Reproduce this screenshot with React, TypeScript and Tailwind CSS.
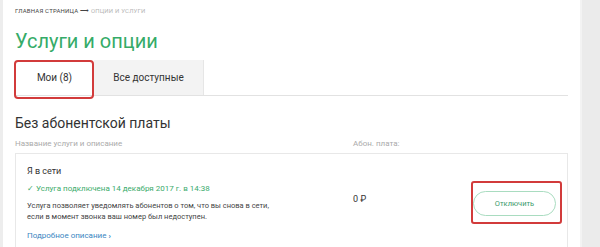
const App = () => {
  return (
    <div className="flex w-[600px] h-[247px] overflow-hidden bg-white font-['Roboto',sans-serif]">
      <div className="w-[3px] shrink-0 bg-[#ededed]" />
      <div className="flex-1 px-[12px] pt-[8px]">
        <p className="text-[6px] leading-[6px] uppercase tracking-[0.2px] text-[#444]">
          Главная страница <span className="text-[#444]">⟶</span>{" "}
          <span className="text-[#b5b5b5]">Опции и услуги</span>
        </p>
        <h1 className="mt-[15px] text-[20px] leading-[24px] text-[#35ab68]">
          Услуги и опции
        </h1>

        <div className="mt-[7px] flex h-[36px] border-b border-[#e2e2e2]">
          <div className="relative flex w-[79px] items-center justify-center bg-white text-[10px] text-[#333]">
            Мои (8)
            <div className="absolute left-[-1px] top-0 h-[39px] w-[80px] rounded-[4px] border-[2.5px] border-[#d23b3b]" />
          </div>
          <div className="flex w-[110px] items-center justify-center bg-[#f3f3f3] border-r border-[#e6e6e6] text-[10px] text-[#333]">
            Все доступные
          </div>
        </div>

        <h2 className="mt-[18px] text-[14px] leading-[18px] text-[#333]">
          Без абонентской платы
        </h2>

        <div className="mt-[7px] flex text-[8px] leading-[9px] text-[#aaa]">
          <span className="w-[338px]">Название услуги и описание</span>
          <span>Абон. плата:</span>
        </div>

        <div className="mt-[5px] flex h-[120px] border border-[#e8e8e8] pl-[11px]">
          <div className="w-[326px] pt-[12px]">
            <p className="text-[9px] leading-[11px] text-[#333]">Я в сети</p>
            <p className="mt-[6.5px] text-[8px] leading-[10px] text-[#3aab6b]">
              ✓ Услуга подключена 14 декабря 2017 г. в 14:38
            </p>
            <p className="mt-[6px] text-[7.5px] leading-[11.5px] text-[#444]">
              Услуга позволяет уведомлять абонентов о том, что вы снова в сети,
              <br />
              если в момент звонка ваш номер был недоступен.
            </p>
            <p className="mt-[8px] text-[8px] leading-[10px] text-[#3a86bf]">
              Подробное описание <span className="font-bold">›</span>
            </p>
          </div>
          <div className="w-[120px] pt-[40px] text-[9px] leading-[11px] text-[#333]">
            0 ₽
          </div>
          <div className="pt-[37px]">
            <div className="relative">
              <button className="flex h-[25px] w-[83px] items-center justify-center rounded-full border border-[#a9dcc0] bg-white text-[7.5px] text-[#3a9a6a]">
                Отключить
              </button>
              <div className="absolute left-[-2px] top-[-10px] h-[43px] w-[91px] rounded-[3px] border-[2.5px] border-[#d23b3b]" />
            </div>
          </div>
        </div>
      </div>
      <div className="w-[20px] shrink-0 border-l-2 border-[#f3f3f3] bg-[#ebebeb]" />
    </div>
  );
};

export default App;
